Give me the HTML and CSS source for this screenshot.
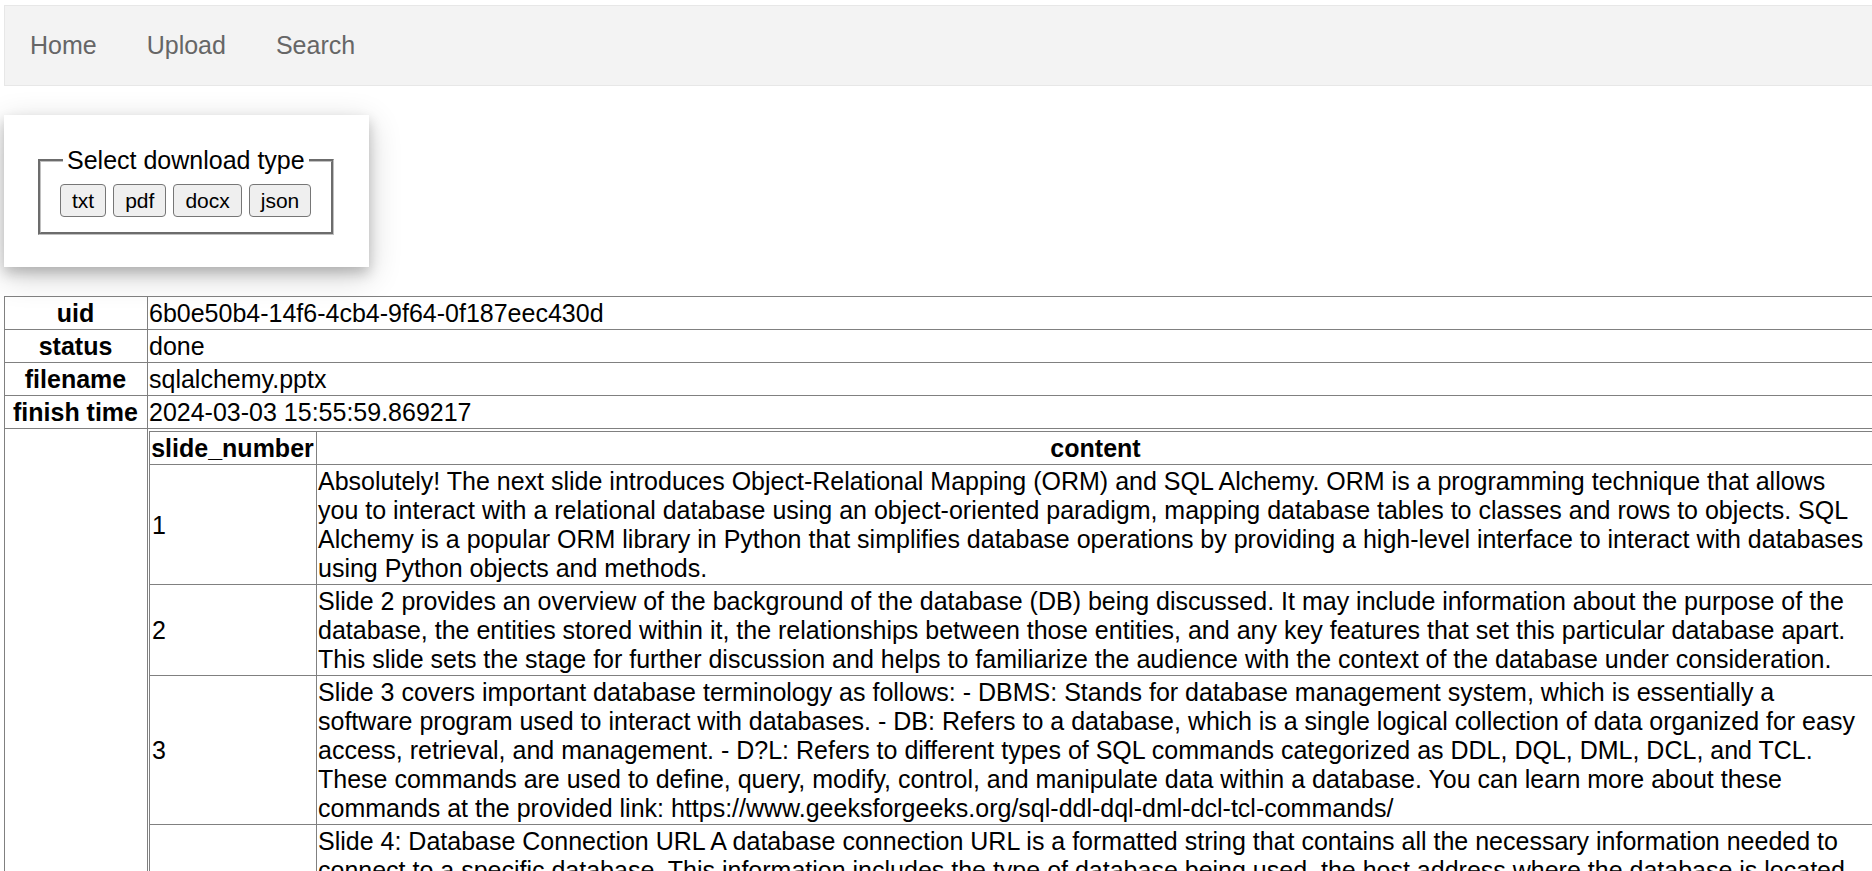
FILE: index.html
```html
<!DOCTYPE html>
<html lang="en">
<head>
<meta charset="utf-8">
<title>Status</title>
<link rel="stylesheet" href="styles.css">
</head>
<body>
<div class="page">
  <nav class="navbar">
    <a href="#home">Home</a>
    <a href="#upload">Upload</a>
    <a href="#search">Search</a>
  </nav>
  <form class="card">
    <fieldset class="downloads">
      <legend>Select download type</legend>
      <div class="buttons">
        <button type="button">txt</button>
        <button type="button">pdf</button>
        <button type="button">docx</button>
        <button type="button">json</button>
      </div>
    </fieldset>
  </form>
  <table class="grid">
    <tr><th class="key" scope="row">uid</th><td>6b0e50b4-14f6-4cb4-9f64-0f187eec430d</td></tr>
    <tr><th class="key" scope="row">status</th><td>done</td></tr>
    <tr><th class="key" scope="row">filename</th><td>sqlalchemy.pptx</td></tr>
    <tr><th class="key" scope="row">finish time</th><td>2024-03-03 15:55:59.869217</td></tr>
    <tr>
      <th class="key"></th>
      <td class="nest">
        <table class="grid slides">
          <tr><th class="number" scope="col">slide_number</th><th scope="col">content</th></tr>
          <tr><td class="index">1</td><td class="content">Absolutely! The next slide introduces Object-Relational Mapping (ORM) and SQL Alchemy. ORM is a programming technique that allows you to interact with a relational database using an object-oriented paradigm, mapping database tables to classes and rows to objects. SQL Alchemy is a popular ORM library in Python that simplifies database operations by providing a high-level interface to interact with databases using Python objects and methods.</td></tr>
          <tr><td class="index">2</td><td class="content">Slide 2 provides an overview of the background of the database (DB) being discussed. It may include information about the purpose of the database, the entities stored within it, the relationships between those entities, and any key features that set this particular database apart. This slide sets the stage for further discussion and helps to familiarize the audience with the context of the database under consideration.</td></tr>
          <tr><td class="index">3</td><td class="content">Slide 3 covers important database terminology as follows: - DBMS: Stands for database management system, which is essentially a software program used to interact with databases. - DB: Refers to a database, which is a single logical collection of data organized for easy access, retrieval, and management. - D?L: Refers to different types of SQL commands categorized as DDL, DQL, DML, DCL, and TCL. These commands are used to define, query, modify, control, and manipulate data within a database. You can learn more about these commands at the provided link: https://www.geeksforgeeks.org/sql-ddl-dql-dml-dcl-tcl-commands/</td></tr>
          <tr><td class="index"></td><td class="content">Slide 4: Database Connection URL A database connection URL is a formatted string that contains all the necessary information needed to connect to a specific database. This information includes the type of database being used, the host address where the database is located</td></tr>
        </table>
      </td>
    </tr>
  </table>
</div>
</body>
</html>
```
FILE: styles.css
```css
* {
  box-sizing: border-box;
}

body {
  margin: 0;
  height: 100vh;
  overflow: hidden;
  background: #fff;
  color: #000;
  font: 25px/29px "Liberation Sans", Arial, sans-serif;
}

.page {
  margin: 5px -6px 0 4px;
}

.navbar {
  display: flex;
  border: 1px solid #e7e7e7;
  background: #f3f3f3;
}

.navbar a {
  padding: 25px;
  color: #666;
  text-decoration: none;
}

.card {
  width: fit-content;
  margin: 29px 0;
  padding: 31px 35px 32px 34px;
  background: #fff;
  box-shadow: 0 6px 12px rgba(0, 0, 0, 0.2), 0 9px 31px rgba(0, 0, 0, 0.19);
}

.downloads {
  margin: 0;
  padding: 9px 20px 15px 19px;
  border: 3px groove #c0c0c0;
}

.downloads legend {
  margin-left: 3px;
  padding: 0 4px;
}

.buttons {
  display: flex;
  gap: 7px;
}

.buttons button {
  padding: 3px 11px;
  border: 1px solid #767676;
  border-radius: 4px;
  background: #efefef;
  color: #000;
  font: 21px/25px "Liberation Sans", Arial, sans-serif;
}

.grid {
  width: 100%;
  border-collapse: collapse;
}

.grid th,
.grid td {
  padding: 2px 2px 1px 1px;
  border: 1px solid #808080;
}

.grid .key {
  width: 143px;
}

.grid .nest {
  padding: 2px 1px;
}

.slides .number {
  width: 167px;
}

.slides .index {
  padding-left: 2px;
}

.slides .content {
  padding-right: 8px;
}
```
